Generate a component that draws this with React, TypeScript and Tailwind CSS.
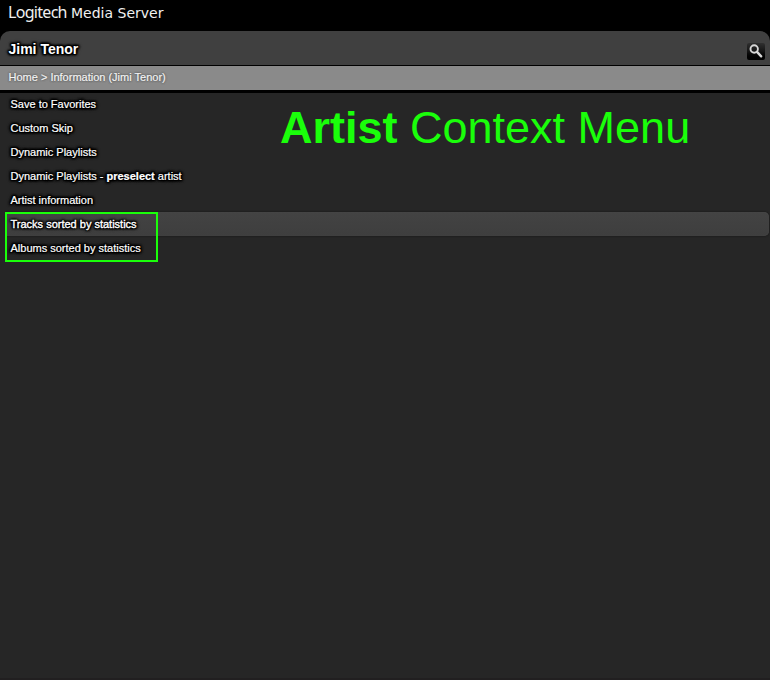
import type { ReactNode } from "react";

const glow =
  "[text-shadow:0_0_1px_#000,0_0_2px_#000,0_0_2px_#000,0_0_3px_#000,0_0_3px_#000,0_0_4px_#000,1px_1px_2px_#000,-1px_-1px_2px_#000,1px_-1px_2px_#000,-1px_1px_2px_#000]";

type Item = { label: ReactNode; active?: boolean };

const items: Item[] = [
  { label: "Save to Favorites" },
  { label: "Custom Skip" },
  { label: "Dynamic Playlists" },
  {
    label: (
      <>
        Dynamic Playlists - <b>preselect</b> artist
      </>
    ),
  },
  { label: "Artist information" },
  { label: "Tracks sorted by statistics", active: true },
  { label: "Albums sorted by statistics" },
];

function SearchButton() {
  return (
    <button
      aria-label="Search"
      className="mt-[12px] mr-[5px] h-[17px] w-[18px] rounded-[2px] bg-linear-to-b from-[#303030] via-[#141414] to-black"
    >
      <svg viewBox="0 0 18 17" className="h-[17px] w-[18px]" fill="none" stroke="#d6d6d6">
        <circle cx="7.2" cy="6" r="3.7" strokeWidth="1.9" />
        <path d="M10 8.9 14.2 13.3" strokeWidth="2.4" strokeLinecap="round" />
      </svg>
    </button>
  );
}

export default function App() {
  return (
    <div className="relative flex h-[680px] w-[770px] flex-col overflow-hidden bg-black font-['Liberation_Sans',Arial,sans-serif] text-white">
      <div className="flex h-[31px] shrink-0 items-start pt-[2px] pl-[8px] font-['Noto_Sans',sans-serif] leading-[20px] text-[#f0f0f0]">
        <span className="w-[63px] text-[16px] tracking-[-0.7px]">Logitech</span>
        <span className="pt-px font-['DejaVu_Sans',sans-serif] text-[14px]">Media Server</span>
      </div>

      <header className="flex h-[34px] shrink-0 justify-between rounded-t-[10px] bg-[#404040]">
        <h1 className={`pt-[9px] pl-[8.5px] text-[14px] leading-[18px] font-bold ${glow}`}>Jimi Tenor</h1>
        <SearchButton />
      </header>

      <nav className="h-[28px] shrink-0 border-t border-b-3 border-black bg-[#8a8a8a] pl-[8.5px] text-[11px] leading-[22px] text-[#f3f3f3] [-webkit-text-stroke:0.2px_#f3f3f3] [text-shadow:0_0_2px_#555,0_0_2px_#555]">
        Home &gt; Information (Jimi Tenor)
      </nav>

      <main className="flex-1 border-b-2 border-[#211f20] bg-[#262626]">
        <ul className="-mt-px">
          {items.map((item, i) => (
            <li
              key={i}
              className={`mr-[1px] ml-[6px] h-[24px] rounded-r-[5px] pl-[4.5px] text-[11px] leading-[24px] whitespace-nowrap ${glow} ${
                item.active
                  ? "bg-linear-to-b from-[#434343] to-[#3e3e3e] inset-shadow-[0_0_1px_#555] shadow-[0_0_2px_#111] [-webkit-text-stroke:0.35px_#fff]"
                  : "[-webkit-text-stroke:0.2px_#fff]"
              }`}
            >
              {item.label}
            </li>
          ))}
        </ul>
      </main>

      <div className="absolute top-[212px] left-[5px] h-[50px] w-[153px] border-2 border-[#1aff0a]" />
      <div className="absolute top-[102px] left-[280px] text-[45px] leading-[52px] whitespace-nowrap text-[#1aff0a]">
        <b>Artist</b> Context Menu
      </div>
    </div>
  );
}
